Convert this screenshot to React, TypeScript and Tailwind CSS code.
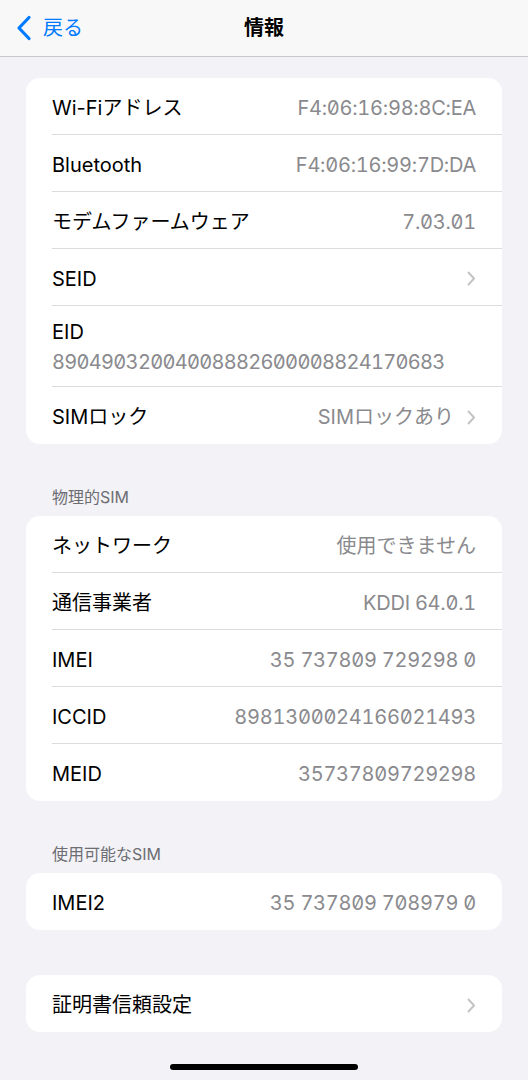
import React from "react";

const font = { fontFamily: 'Inter, "Noto Sans CJK JP", sans-serif' };

function Chevron() {
  return (
    <svg width="9" height="15" viewBox="0 0 9 15" className="ml-[13px] shrink-0">
      <path d="M1.5 1.5 L7 7.5 L1.5 13.5" fill="none" stroke="#c4c4c7" strokeWidth="2" strokeLinecap="round" strokeLinejoin="round" />
    </svg>
  );
}

type RowProps = { label: string; value?: string; chevron?: boolean; last?: boolean; mono?: boolean };

function Row({ label, value, chevron, last, mono = true }: RowProps) {
  return (
    <div className="pl-[26px]">
      <div className={`h-[57px] pt-[3px] pr-[26px] flex items-center justify-between ${last ? "" : "border-b border-[#dcdce0]"}`}>
        <span className="text-[20px] text-black">{label}</span>
        <div className="flex items-center">
          {value && (
            <span className={`text-[20px] text-[#8a8a8e] ${mono ? "tabular-nums slashed-zero tracking-[-0.25px]" : ""}`}>{value}</span>
          )}
          {chevron && <Chevron />}
        </div>
      </div>
    </div>
  );
}

function Card({ children }: { children: React.ReactNode }) {
  return <div className="bg-white rounded-[14px] overflow-hidden">{children}</div>;
}

function SectionHeader({ children }: { children: React.ReactNode }) {
  return <div className="px-[52px] pt-[42px] pb-[8px] text-[16px] leading-[22px] text-[#6d6d72]">{children}</div>;
}

export default function App() {
  return (
    <div className="min-h-[1080px] w-[528px] bg-[#f2f2f7] relative" style={font}>
      <div className="h-[57px] bg-[#f8f8f9] border-b border-[#c9c9cd] flex items-center relative">
        <div className="flex items-center pl-[16px]">
          <svg width="16" height="26" viewBox="0 0 16 26">
            <path d="M13 2.5 L3 13 L13 23.5" fill="none" stroke="#007aff" strokeWidth="3.2" strokeLinecap="round" strokeLinejoin="round" />
          </svg>
          <span className="ml-[11px] text-[20px] text-[#007aff]">戻る</span>
        </div>
        <div className="absolute left-0 right-0 text-center text-[20px] font-bold text-black pointer-events-none">情報</div>
      </div>

      <div className="px-[26px] pt-[21px]">
        <Card>
          <Row label="Wi-Fiアドレス" value="F4:06:16:98:8C:EA" />
          <Row label="Bluetooth" value="F4:06:16:99:7D:DA" />
          <Row label="モデムファームウェア" value="7.03.01" />
          <Row label="SEID" chevron />
          <div className="pl-[26px]">
            <div className="h-[81px] pt-[2px] pr-[26px] flex flex-col justify-center gap-[2px] border-b border-[#dcdce0]">
              <span className="text-[20px] leading-[28px] text-black">EID</span>
              <span className="text-[20px] leading-[28px] text-[#8a8a8e] tabular-nums slashed-zero tracking-[-0.7px]">89049032004008882600008824170683</span>
            </div>
          </div>
          <Row label="SIMロック" value="SIMロックあり" chevron last mono={false} />
        </Card>
      </div>

      <SectionHeader>物理的SIM</SectionHeader>
      <div className="px-[26px]">
        <Card>
          <Row label="ネットワーク" value="使用できません" mono={false} />
          <Row label="通信事業者" value="KDDI 64.0.1" />
          <Row label="IMEI" value="35 737809 729298 0" />
          <Row label="ICCID" value="8981300024166021493" />
          <Row label="MEID" value="35737809729298" last />
        </Card>
      </div>

      <SectionHeader>使用可能なSIM</SectionHeader>
      <div className="px-[26px]">
        <Card>
          <Row label="IMEI2" value="35 737809 708979 0" last />
        </Card>
      </div>

      <div className="px-[26px] pt-[45px]">
        <Card>
          <Row label="証明書信頼設定" chevron last />
        </Card>
      </div>

      <div className="flex justify-center pt-[32px]">
        <div className="w-[188px] h-[6px] rounded-full bg-black" />
      </div>
    </div>
  );
}
